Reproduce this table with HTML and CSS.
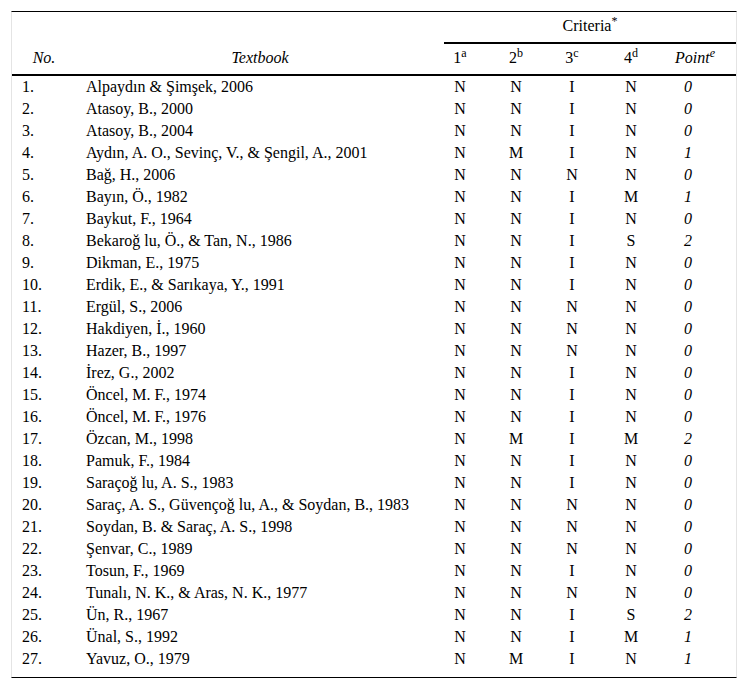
FILE: index.html
```html
<!DOCTYPE html>
<html>
<head>
<meta charset="utf-8">
<link rel="stylesheet" href="styles.css">
</head>
<body>
<table class="tbl">
  <colgroup>
    <col class="c-no"><col class="c-book"><col class="c-1"><col class="c-2"><col class="c-3"><col class="c-4"><col class="c-5">
  </colgroup>
  <thead>
    <tr>
      <th class="h-no" rowspan="2"><i>No.</i></th>
      <th class="h-book" rowspan="2"><i>Textbook</i></th>
      <th class="h-criteria" colspan="5">Criteria<sup>*</sup></th>
    </tr>
    <tr>
      <th class="k1">1<sup>a</sup></th>
      <th class="k2">2<sup>b</sup></th>
      <th class="k3">3<sup>c</sup></th>
      <th class="k4">4<sup>d</sup></th>
      <th class="k5 h-point"><i>Point<sup>e</sup></i></th>
    </tr>
  </thead>
  <tbody>
    <tr><td class="no">1.</td><td class="book">Alpaydın &amp; Şimşek, 2006</td><td class="k1">N</td><td class="k2">N</td><td class="k3">I</td><td class="k4">N</td><td class="k5 p">0</td></tr>
    <tr><td class="no">2.</td><td class="book">Atasoy, B., 2000</td><td class="k1">N</td><td class="k2">N</td><td class="k3">I</td><td class="k4">N</td><td class="k5 p">0</td></tr>
    <tr><td class="no">3.</td><td class="book">Atasoy, B., 2004</td><td class="k1">N</td><td class="k2">N</td><td class="k3">I</td><td class="k4">N</td><td class="k5 p">0</td></tr>
    <tr><td class="no">4.</td><td class="book">Aydın, A. O., Sevinç, V., &amp; Şengil, A., 2001</td><td class="k1">N</td><td class="k2">M</td><td class="k3">I</td><td class="k4">N</td><td class="k5 p">1</td></tr>
    <tr><td class="no">5.</td><td class="book">Bağ, H., 2006</td><td class="k1">N</td><td class="k2">N</td><td class="k3">N</td><td class="k4">N</td><td class="k5 p">0</td></tr>
    <tr><td class="no">6.</td><td class="book">Bayın, Ö., 1982</td><td class="k1">N</td><td class="k2">N</td><td class="k3">I</td><td class="k4">M</td><td class="k5 p">1</td></tr>
    <tr><td class="no">7.</td><td class="book">Baykut, F., 1964</td><td class="k1">N</td><td class="k2">N</td><td class="k3">I</td><td class="k4">N</td><td class="k5 p">0</td></tr>
    <tr><td class="no">8.</td><td class="book">Bekaroğ lu, Ö., &amp; Tan, N., 1986</td><td class="k1">N</td><td class="k2">N</td><td class="k3">I</td><td class="k4">S</td><td class="k5 p">2</td></tr>
    <tr><td class="no">9.</td><td class="book">Dikman, E., 1975</td><td class="k1">N</td><td class="k2">N</td><td class="k3">I</td><td class="k4">N</td><td class="k5 p">0</td></tr>
    <tr><td class="no">10.</td><td class="book">Erdik, E., &amp; Sarıkaya, Y., 1991</td><td class="k1">N</td><td class="k2">N</td><td class="k3">I</td><td class="k4">N</td><td class="k5 p">0</td></tr>
    <tr><td class="no">11.</td><td class="book">Ergül, S., 2006</td><td class="k1">N</td><td class="k2">N</td><td class="k3">N</td><td class="k4">N</td><td class="k5 p">0</td></tr>
    <tr><td class="no">12.</td><td class="book">Hakdiyen, İ., 1960</td><td class="k1">N</td><td class="k2">N</td><td class="k3">N</td><td class="k4">N</td><td class="k5 p">0</td></tr>
    <tr><td class="no">13.</td><td class="book">Hazer, B., 1997</td><td class="k1">N</td><td class="k2">N</td><td class="k3">N</td><td class="k4">N</td><td class="k5 p">0</td></tr>
    <tr><td class="no">14.</td><td class="book">İrez, G., 2002</td><td class="k1">N</td><td class="k2">N</td><td class="k3">I</td><td class="k4">N</td><td class="k5 p">0</td></tr>
    <tr><td class="no">15.</td><td class="book">Öncel, M. F., 1974</td><td class="k1">N</td><td class="k2">N</td><td class="k3">I</td><td class="k4">N</td><td class="k5 p">0</td></tr>
    <tr><td class="no">16.</td><td class="book">Öncel, M. F., 1976</td><td class="k1">N</td><td class="k2">N</td><td class="k3">I</td><td class="k4">N</td><td class="k5 p">0</td></tr>
    <tr><td class="no">17.</td><td class="book">Özcan, M., 1998</td><td class="k1">N</td><td class="k2">M</td><td class="k3">I</td><td class="k4">M</td><td class="k5 p">2</td></tr>
    <tr><td class="no">18.</td><td class="book">Pamuk, F., 1984</td><td class="k1">N</td><td class="k2">N</td><td class="k3">I</td><td class="k4">N</td><td class="k5 p">0</td></tr>
    <tr><td class="no">19.</td><td class="book">Saraçoğ lu, A. S., 1983</td><td class="k1">N</td><td class="k2">N</td><td class="k3">I</td><td class="k4">N</td><td class="k5 p">0</td></tr>
    <tr><td class="no">20.</td><td class="book">Saraç, A. S., Güvençoğ lu, A., &amp; Soydan, B., 1983</td><td class="k1">N</td><td class="k2">N</td><td class="k3">N</td><td class="k4">N</td><td class="k5 p">0</td></tr>
    <tr><td class="no">21.</td><td class="book">Soydan, B. &amp; Saraç, A. S., 1998</td><td class="k1">N</td><td class="k2">N</td><td class="k3">N</td><td class="k4">N</td><td class="k5 p">0</td></tr>
    <tr><td class="no">22.</td><td class="book">Şenvar, C., 1989</td><td class="k1">N</td><td class="k2">N</td><td class="k3">N</td><td class="k4">N</td><td class="k5 p">0</td></tr>
    <tr><td class="no">23.</td><td class="book">Tosun, F., 1969</td><td class="k1">N</td><td class="k2">N</td><td class="k3">I</td><td class="k4">N</td><td class="k5 p">0</td></tr>
    <tr><td class="no">24.</td><td class="book">Tunalı, N. K., &amp; Aras, N. K., 1977</td><td class="k1">N</td><td class="k2">N</td><td class="k3">N</td><td class="k4">N</td><td class="k5 p">0</td></tr>
    <tr><td class="no">25.</td><td class="book">Ün, R., 1967</td><td class="k1">N</td><td class="k2">N</td><td class="k3">I</td><td class="k4">S</td><td class="k5 p">2</td></tr>
    <tr><td class="no">26.</td><td class="book">Ünal, S., 1992</td><td class="k1">N</td><td class="k2">N</td><td class="k3">I</td><td class="k4">M</td><td class="k5 p">1</td></tr>
    <tr class="last"><td class="no">27.</td><td class="book">Yavuz, O., 1979</td><td class="k1">N</td><td class="k2">M</td><td class="k3">I</td><td class="k4">N</td><td class="k5 p">1</td></tr>
  </tbody>
</table>
</body>
</html>
```

FILE: styles.css
```css
html, body {
  margin: 0;
  padding: 0;
  background: #fff;
}
body {
  padding: 11px 0 0 11px;
  font-family: "Liberation Serif", "Times New Roman", serif;
  font-size: 16px;
  color: #000;
}
.tbl {
  width: 726px;
  table-layout: fixed;
  border-collapse: separate;
  border-spacing: 0;
  border-top: 1px solid #000;
  border-bottom: 1px solid #000;
  border-left: 1px solid #e4e4e4;
  border-right: 1px solid #e4e4e4;
}
.c-no { width: 64px; }
.c-book { width: 368px; }
.c-1, .c-2, .c-3 { width: 56px; }
.c-4 { width: 60px; }
.c-5 { width: 64px; }

th {
  font-weight: normal;
  line-height: 16px;
  padding: 6px 0 8px 0;
  vertical-align: bottom;
  border-bottom: 2px solid #000;
  text-align: center;
}
sup {
  font-size: 12px;
  line-height: 0;
  vertical-align: 6px;
}
td {
  height: 22px;
  line-height: 22px;
  padding: 0;
  white-space: nowrap;
}
.no { padding-left: 10px; }
.book { padding-left: 10px; }
.k1, .k2, .k3 { text-align: center; padding-right: 24px; }
.k4 { text-align: center; padding-right: 22px; }
.k5 { text-align: center; padding-right: 32px; }
th.h-point { padding-right: 18px; }
.p { font-style: italic; }
.last td { padding-bottom: 7px; }
```
